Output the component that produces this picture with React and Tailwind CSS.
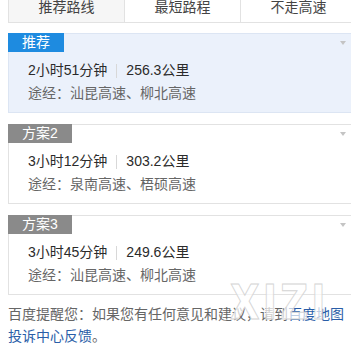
import React from "react";

const FONT = { fontFamily: '"Liberation Sans", "Noto Sans CJK SC", sans-serif' };

function Card({ label, blue, time, dist, via }) {
  return (
    <div
      className={
        "relative w-[345px] border " +
        (blue ? "bg-[#ebf1fb] border-[#dce5f3]" : "bg-white border-[#e2e2e2]")
      }
    >
      <div
        className={
          "-mt-px -ml-px block h-[19px] w-fit px-[14px] text-[14px] leading-[19px] text-white " +
          (blue ? "bg-[#1e8be0]" : "bg-[#8a8a8a]")
        }
      >
        {label}
      </div>
      <div className="absolute right-[6px] top-[7px] h-0 w-0 border-l-[3px] border-r-[3px] border-t-[4px] border-l-transparent border-r-transparent border-t-[#c4c4c4]" />
      <div className="pl-[19px] pt-[7px] pb-[7px] text-[14px] leading-[23px]">
        <div className="flex items-center text-[#2b2b2b]">
          <span>{time}</span>
          <span className="mx-[9px] h-[14px] w-px bg-[#d8d8d8]" />
          <span>{dist}</span>
        </div>
        <div className="text-[#666]">途经：{via}</div>
      </div>
    </div>
  );
}

export default function App() {
  return (
    <div className="relative h-[351px] w-[351px] overflow-hidden bg-white" style={FONT}>
      <div className="ml-[8px] flex h-[23px] w-[360px] border-b border-[#e2e2e2] text-[14px] leading-[14px] text-[#444]">
        <div className="flex w-[116px] justify-center border-l border-[#e2e2e2] bg-[#f6f6f6]">推荐路线</div>
        <div className="flex w-[116px] justify-center border-l border-[#e2e2e2]">最短路程</div>
        <div className="flex w-[116px] justify-center border-l border-[#e2e2e2]">不走高速</div>
      </div>
      <div className="ml-[8px] mt-[10px] flex flex-col gap-[11px]">
        <Card label="推荐" blue time="2小时51分钟" dist="256.3公里" via="汕昆高速、柳北高速" />
        <Card label="方案2" time="3小时12分钟" dist="303.2公里" via="泉南高速、梧硕高速" />
        <Card label="方案3" time="3小时45分钟" dist="249.6公里" via="汕昆高速、柳北高速" />
      </div>
      <div className="ml-[8px] mt-[8px] text-[14px] leading-[22px] text-[#666]">
        <div>
          百度提醒您：如果您有任何意见和建议，请到<span className="text-[#2a5ea8]">百度地图</span>
        </div>
        <div>
          <span className="text-[#2a5ea8]">投诉中心反馈</span>。
        </div>
      </div>
      <div
        className="pointer-events-none absolute left-[230px] top-[278px] origin-left scale-x-[0.8] text-[48px] font-bold leading-[48px] tracking-[4px] text-white/70 [-webkit-text-stroke:1px_#d4d4d4]"
        style={{ fontFamily: '"DejaVu Sans", sans-serif' }}
      >
        XIZI
      </div>
    </div>
  );
}
